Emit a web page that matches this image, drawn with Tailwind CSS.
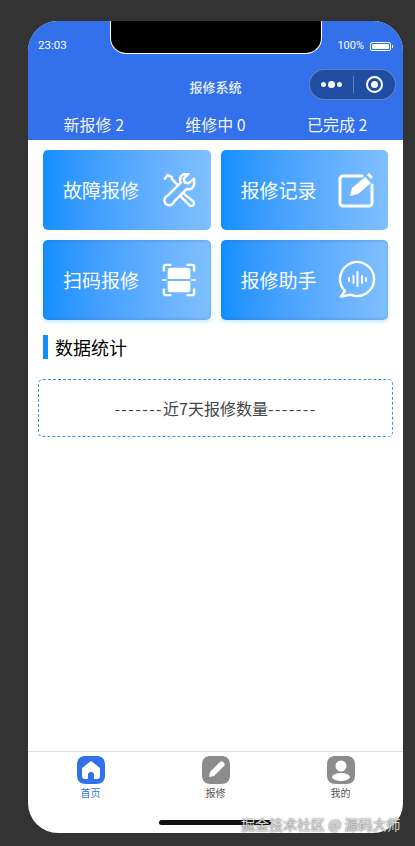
<!DOCTYPE html>
<html lang="zh">
<head>
  <meta charset="UTF-8">
  <title>报修系统</title>
  <script src="https://cdn.jsdelivr.net/npm/@tailwindcss/browser@4"></script>
</head>
<body class="bg-[#333333] h-[846px] w-[415px] overflow-hidden font-['Noto_Sans_CJK_SC','Liberation_Sans',sans-serif]">

  <div class="pt-[21px] pl-[28px]">
  <div class="relative w-[375px] h-[812px] bg-white rounded-[30px] overflow-hidden flex flex-col">

    <!-- notch -->
    <div class="absolute left-[82px] top-0 w-[212px] h-[33px] bg-black border border-t-0 border-white rounded-b-[16px]"></div>

    <!-- header -->
    <div class="bg-[#3370ec] text-white h-[119px] shrink-0">
      <div class="h-[48px] flex justify-between items-start pt-[17px] pl-[10px] pr-[10px]">
        <span class="text-[11.500px] leading-[14px] font-['Roboto']">23:03</span>
        <div class="flex items-center gap-[6px] pt-[1px]">
          <span class="text-[11px] leading-[14px] font-['Roboto']">100%</span>
          <div class="flex items-center">
            <div class="w-[21px] h-[9px] border border-white rounded-[2px] p-[1px]"><div class="w-full h-full bg-white rounded-[1px]"></div></div>
            <div class="w-[1px] h-[3px] bg-white ml-[1px]"></div>
          </div>
        </div>
      </div>
      <div class="relative h-[32px] flex items-center justify-center">
        <span class="text-[13px] font-medium text-white/90 mt-[4px]">报修系统</span>
        <div class="absolute left-[281px] top-0 w-[87px] h-[31px] rounded-full bg-[#1f4da1] border border-white/30 flex items-center">
          <div class="w-[43px] flex items-center justify-center gap-[2px]">
            <span class="w-[5px] h-[5px] rounded-full bg-white"></span>
            <span class="w-[7px] h-[7px] rounded-full bg-white"></span>
            <span class="w-[5px] h-[5px] rounded-full bg-white"></span>
          </div>
          <div class="w-px h-[17px] bg-white/30"></div>
          <div class="flex-1 flex items-center justify-center">
            <div class="w-[17px] h-[17px] rounded-full border-[2px] border-white flex items-center justify-center">
              <span class="w-[7px] h-[7px] rounded-full bg-white"></span>
            </div>
          </div>
        </div>
      </div>
      <div class="grid grid-cols-3 text-[16px] leading-[24px] text-center text-white/95 pt-[11px] px-[5px]">
        <span>新报修 2</span>
        <span>维修中 0</span>
        <span>已完成 2</span>
      </div>
    </div>

    <!-- cards -->
    <div class="grid grid-cols-2 gap-x-[10px] gap-y-[10px] pl-[15px] pr-[15px] pt-[10px]">
      <div class="h-[80px] rounded-[5px] bg-gradient-to-r from-[#0f8fff] to-[#80bfff] flex items-center justify-between pl-[20px] pr-[15px] text-white text-[19px]">
        <span>故障报修</span>
        <svg width="34" height="34" viewBox="0 0 36 36" fill="none" stroke="white" stroke-width="2.600" stroke-linejoin="round" stroke-linecap="round">
          <path d="M3 6l3-4 4 2 1 3 6 6"/>
          <path d="M22 21l11 9c1 1 1 3 0 4s-3 1-4 0L19 24"/>
          <path d="M34 6l-6 5-4-1-1-4 5-5c-4-1-8 1-9 5 0 2 0 3 1 4L6 24c-3 1-4 4-3 7 1 3 5 4 8 2 1-1 2-2 2-3l13-13c4 1 7-1 8-5 0-2 0-3 0-4z"/>
        </svg>
      </div>
      <div class="h-[80px] rounded-[5px] bg-gradient-to-r from-[#0f8fff] to-[#80bfff] flex items-center justify-between pl-[20px] pr-[14px] text-white text-[19px]">
        <span>报修记录</span>
        <svg width="36" height="36" viewBox="0 0 36 36" fill="none">
          <path d="M24 4H5a3 3 0 0 0-3 3v24a3 3 0 0 0 3 3h26a3 3 0 0 0 3-3V13" stroke="white" stroke-width="3" stroke-linecap="round"/>
          <path d="M12 24l2-8L27 5l6 6-13 11z" fill="white"/>
          <path d="M29 3l2-2 4 4-2 2z" fill="white"/>
        </svg>
      </div>
      <div class="h-[80px] rounded-[5px] bg-gradient-to-r from-[#0f8fff] to-[#80bfff] flex items-center justify-between pl-[20px] pr-[15px] text-white text-[19px] shadow-[inset_0_2px_2px_rgba(60,80,120,0.15),inset_0_-2px_2px_rgba(60,80,120,0.15),0_2px_4px_#bfeeff]">
        <span>扫码报修</span>
        <svg width="34" height="34" viewBox="0 0 36 36" fill="none">
          <path d="M2 9V4a2 2 0 0 1 2-2h6M26 2h6a2 2 0 0 1 2 2v5M2 27v5a2 2 0 0 0 2 2h6M26 34h6a2 2 0 0 0 2-2v-5" stroke="white" stroke-width="2.600"/>
          <path d="M6 17V8a3 3 0 0 1 3-3h18a3 3 0 0 1 3 3v9z" fill="white"/>
          <path d="M6 19h24v9a3 3 0 0 1-3 3H9a3 3 0 0 1-3-3z" fill="white"/>
          <path d="M0 18h5M31 18h5" stroke="white" stroke-width="1.500"/>
        </svg>
      </div>
      <div class="h-[80px] rounded-[5px] bg-gradient-to-r from-[#0f8fff] to-[#80bfff] flex items-center justify-between pl-[20px] pr-[11px] text-white text-[19px] shadow-[inset_0_2px_2px_rgba(60,80,120,0.15),inset_0_-2px_2px_rgba(60,80,120,0.15),0_2px_4px_#bfeeff]">
        <span>报修助手</span>
        <svg width="40" height="40" viewBox="0 0 40 40" fill="none" stroke="white" stroke-linecap="round" stroke-linejoin="round">
          <path d="M8 31A17 17 0 1 1 13.500 34.700L4 36.500z" stroke-width="2.400"/>
          <path d="M12 18v3M16.500 16v7M20.500 12v14M25 16v7M29 18v3" stroke-width="2"/>
        </svg>
      </div>
    </div>

    <!-- stats -->
    <div class="pl-[15px] pt-[15px] flex items-center">
      <div class="w-[5px] h-[24px] bg-[#0f8fff]"></div>
      <span class="ml-[7px] text-[18px] leading-[24px] text-black">数据统计</span>
    </div>
    <div class="mx-[10px] mt-[20px] h-[58px] rounded-[5px] border border-dashed border-[#2a9bd8] flex items-center justify-center text-[16px] text-[#444444]">
      <span class="tracking-[1.400px]">-------</span><span>近7天报修数量</span><span class="tracking-[1.400px]">-------</span>
    </div>

    <!-- tab bar -->
    <div class="mt-auto h-[82px] shrink-0 border-t border-[#dddddd] grid grid-cols-3 text-[10px] leading-[14px] text-[#555555] text-center pt-[4px]">
      <div class="flex flex-col items-center gap-[2px]">
        <svg width="28" height="28" viewBox="0 0 28 28">
          <path d="M9 0h10c6 0 9 3 9 9v10c0 6-3 9-9 9H9c-6 0-9-3-9-9V9c0-6 3-9 9-9z" fill="#3370ec"/>
          <path d="M14 5l9 7v8c0 2-1 3-3 3h-3v-4a3 3 0 0 0-6 0v4H8c-2 0-3-1-3-3v-8z" fill="white"/>
        </svg>
        <span class="text-[#3370ec]">首页</span>
      </div>
      <div class="flex flex-col items-center gap-[2px]">
        <svg width="28" height="28" viewBox="0 0 28 28">
          <path d="M9 0h10c6 0 9 3 9 9v10c0 6-3 9-9 9H9c-6 0-9-3-9-9V9c0-6 3-9 9-9z" fill="#8c8c8c"/>
          <path d="M7 21l1-5L18 6c1-1 2-1 3 0l1 1c1 1 1 2 0 3L12 20z" fill="white"/>
        </svg>
        <span>报修</span>
      </div>
      <div class="flex flex-col items-center gap-[2px]">
        <svg width="28" height="28" viewBox="0 0 28 28">
          <path d="M9 0h10c6 0 9 3 9 9v10c0 6-3 9-9 9H9c-6 0-9-3-9-9V9c0-6 3-9 9-9z" fill="#8c8c8c"/>
          <circle cx="14" cy="10" r="5.500" fill="white"/>
          <ellipse cx="14" cy="21" rx="9" ry="4" fill="white"/>
        </svg>
        <span>我的</span>
      </div>
    </div>

    <!-- home indicator -->
    <div class="absolute left-[131px] top-[799px] w-[112px] h-[5px] rounded-full bg-[#111111]"></div>
  </div>
  </div>

  <!-- watermark -->
  <div class="absolute left-[241px] top-[815px] text-[14px] leading-[18px] text-[#d8d8d8] [text-shadow:0_0_2px_#333333] whitespace-nowrap">掘金技术社区 @ 源码大师</div>

</body>
</html>
